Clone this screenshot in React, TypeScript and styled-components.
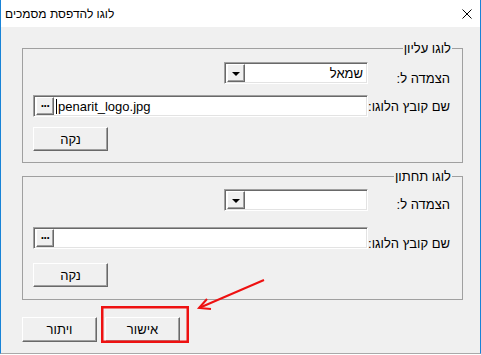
import React, { FC, ReactElement } from 'react';
import styled, { createGlobalStyle } from 'styled-components';

const GlobalStyle = createGlobalStyle`
    html, body {
        margin: 0;
        padding: 0;
        background: #ffffff;
    }
    body {
        font-family: "Liberation Sans", "DejaVu Sans", Arial, sans-serif;
        font-size: 12px;
        color: #000;
    }
`

const Page = styled.div`
    position: relative;
    width: 481px;
    height: 355px;
`

const Window = styled.div`
    width: 481px;
    height: 354px;
    box-sizing: border-box;
    border-left: 1px solid #1883d7;
    border-right: 1px solid #1883d7;
    border-bottom: 1px solid #a9a9a9;
    background: #f0f0f0;
    display: flex;
    flex-direction: column;
`

const TitleBar = styled.div`
    height: 27px;
    flex-shrink: 0;
    background: #ffffff;
    display: flex;
    align-items: center;
    justify-content: space-between;
    padding: 0 8px 0 4px;
    font-size: 12px;
`

const Body = styled.div`
    flex: 1;
    padding: 14px 17px 0 21px;
    display: flex;
    flex-direction: column;
`

const GroupBox = styled.fieldset<{ $top?: number; $pb: number }>`
    margin: ${p => p.$top ?? 0}px 0 0 0;
    padding: 0 10px ${p => p.$pb}px 10px;
    border: 1px solid #a0a0a0;
    min-width: 0;
`

const Legend = styled.legend`
    padding: 0 1px;
    margin: 0;
    font-size: 13px;
    line-height: 15px;
`

const Row = styled.div<{ $mt: number }>`
    display: grid;
    grid-template-columns: 84px 1fr;
    margin-top: ${p => p.$mt}px;
`

const Label = styled.div<{ $offset: number }>`
    padding-top: ${p => p.$offset}px;
    padding-right: 2px;
    font-size: 13px;
    line-height: 15px;
    white-space: nowrap;
`

const Sunken = styled.div<{ $width?: number }>`
    width: ${p => (p.$width ? `${p.$width}px` : 'auto')};
    height: 22px;
    box-sizing: border-box;
    background: #ffffff;
    border-top: 1px solid #a0a0a0;
    border-right: 1px solid #ffffff;
    border-bottom: 1px solid #ffffff;
    border-left: 1px solid #a0a0a0;
    box-shadow: inset 1px 1px 0 #696969, inset -1px -1px 0 #e3e3e3;
    display: flex;
    align-items: center;
    padding: 2px;
`

const FieldText = styled.span<{ $ltr?: boolean }>`
    flex: 1;
    direction: ${p => (p.$ltr ? 'ltr' : 'rtl')};
    text-align: ${p => (p.$ltr ? 'left' : 'right')};
    padding: ${p => (p.$ltr ? '0 0 0 2px' : '0 2px 0 0')};
    font-size: 13px;
    white-space: nowrap;
    overflow: hidden;
    display: flex;
    align-items: center;
`

const Caret = styled.span`
    display: inline-block;
    width: 1px;
    height: 15px;
    background: #000;
    margin-right: 1px;
`

const SmallButton = styled.div`
    width: 18px;
    height: 18px;
    box-sizing: border-box;
    background: #f0f0f0;
    border-top: 1px solid #ffffff;
    border-left: 1px solid #ffffff;
    border-right: 1px solid #696969;
    border-bottom: 1px solid #696969;
    box-shadow: inset -1px -1px 0 #a0a0a0;
    display: flex;
    align-items: center;
    justify-content: center;
`

const Dots = styled.span`
    font-size: 12px;
    font-weight: bold;
    line-height: 1;
    letter-spacing: -0.5px;
    transform: translateY(-3px);
`

const Arrow = styled.span`
    width: 0;
    height: 0;
    border-left: 4px solid transparent;
    border-right: 4px solid transparent;
    border-top: 4px solid #000;
    margin-top: 1px;
`

const PushButton = styled.div<{ $h: number }>`
    width: 75px;
    height: ${p => p.$h}px;
    box-sizing: border-box;
    background: #f0f0f0;
    border-top: 1px solid #ffffff;
    border-left: 1px solid #ffffff;
    border-right: 1px solid #696969;
    border-bottom: 1px solid #696969;
    box-shadow: inset -1px -1px 0 #a0a0a0;
    display: flex;
    align-items: center;
    justify-content: center;
    font-size: 13px;
    direction: rtl;
`

const ButtonCell = styled.div`
    display: flex;
    justify-content: flex-end;
`

const ButtonRow = styled.div`
    display: flex;
    gap: 8px;
    margin-top: 17px;
`

const Overlay = styled.svg`
    position: absolute;
    left: 0;
    top: 0;
    pointer-events: none;
`

type GroupProps = {
    title: string;
    anchor: string;
    file: string;
    spacing: number[];
    labelOffsets: number[];
    top?: number;
    bottom: number;
}

const LogoGroup: FC<GroupProps> = (props: GroupProps): ReactElement => {
    return (
        <GroupBox dir="rtl" $top={props.top} $pb={props.bottom}>
            <Legend>{props.title}</Legend>
            <Row $mt={props.spacing[0]}>
                <Label $offset={props.labelOffsets[0]}>הצמדה ל:</Label>
                <Sunken $width={144}>
                    <FieldText>{props.anchor}</FieldText>
                    <SmallButton><Arrow /></SmallButton>
                </Sunken>
            </Row>
            <Row $mt={props.spacing[1]}>
                <Label $offset={props.labelOffsets[1]}>שם קובץ הלוגו:</Label>
                <Sunken>
                    <FieldText $ltr>
                        {props.file ? <Caret /> : null}
                        {props.file}
                    </FieldText>
                    <SmallButton><Dots>...</Dots></SmallButton>
                </Sunken>
            </Row>
            <Row $mt={props.spacing[2]}>
                <span></span>
                <ButtonCell>
                    <PushButton $h={24}>נקה</PushButton>
                </ButtonCell>
            </Row>
        </GroupBox>
    )
}

const App: FC = (): ReactElement => {
    return (
        <Page>
            <GlobalStyle />
            <Window>
                <TitleBar>
                    <span dir="rtl">לוגו להדפסת מסמכים</span>
                    <svg width="10" height="10" viewBox="0 0 10 10">
                        <path d="M0.5 0.5 L9.5 9.5 M9.5 0.5 L0.5 9.5" stroke="#000" strokeWidth="1" />
                    </svg>
                </TitleBar>
                <Body>
                    <LogoGroup
                        title="לוגו עליון"
                        anchor="שמאל"
                        file="penarit_logo.jpg"
                        spacing={[6, 9, 10]}
                        labelOffsets={[9, 4]}
                        bottom={11}
                    />
                    <LogoGroup
                        title="לוגו תחתון"
                        anchor=""
                        file=""
                        spacing={[5, 15, 12]}
                        labelOffsets={[8, 9]}
                        top={6}
                        bottom={12}
                    />
                    <ButtonRow>
                        <PushButton $h={25}>ויתור</PushButton>
                        <PushButton $h={25}>אישור</PushButton>
                    </ButtonRow>
                </Body>
            </Window>
            <Overlay width="481" height="355">
                <rect x="102.25" y="307.25" width="85.5" height="34.5" fill="none" stroke="#ee1111" strokeWidth="2.5" />
                <path d="M264 280 L199 308" stroke="#ee1111" strokeWidth="2" fill="none" />
                <path d="M207 299 L199 308 L211 309" stroke="#ee1111" strokeWidth="2" fill="none" />
            </Overlay>
        </Page>
    )
}

export default App;
